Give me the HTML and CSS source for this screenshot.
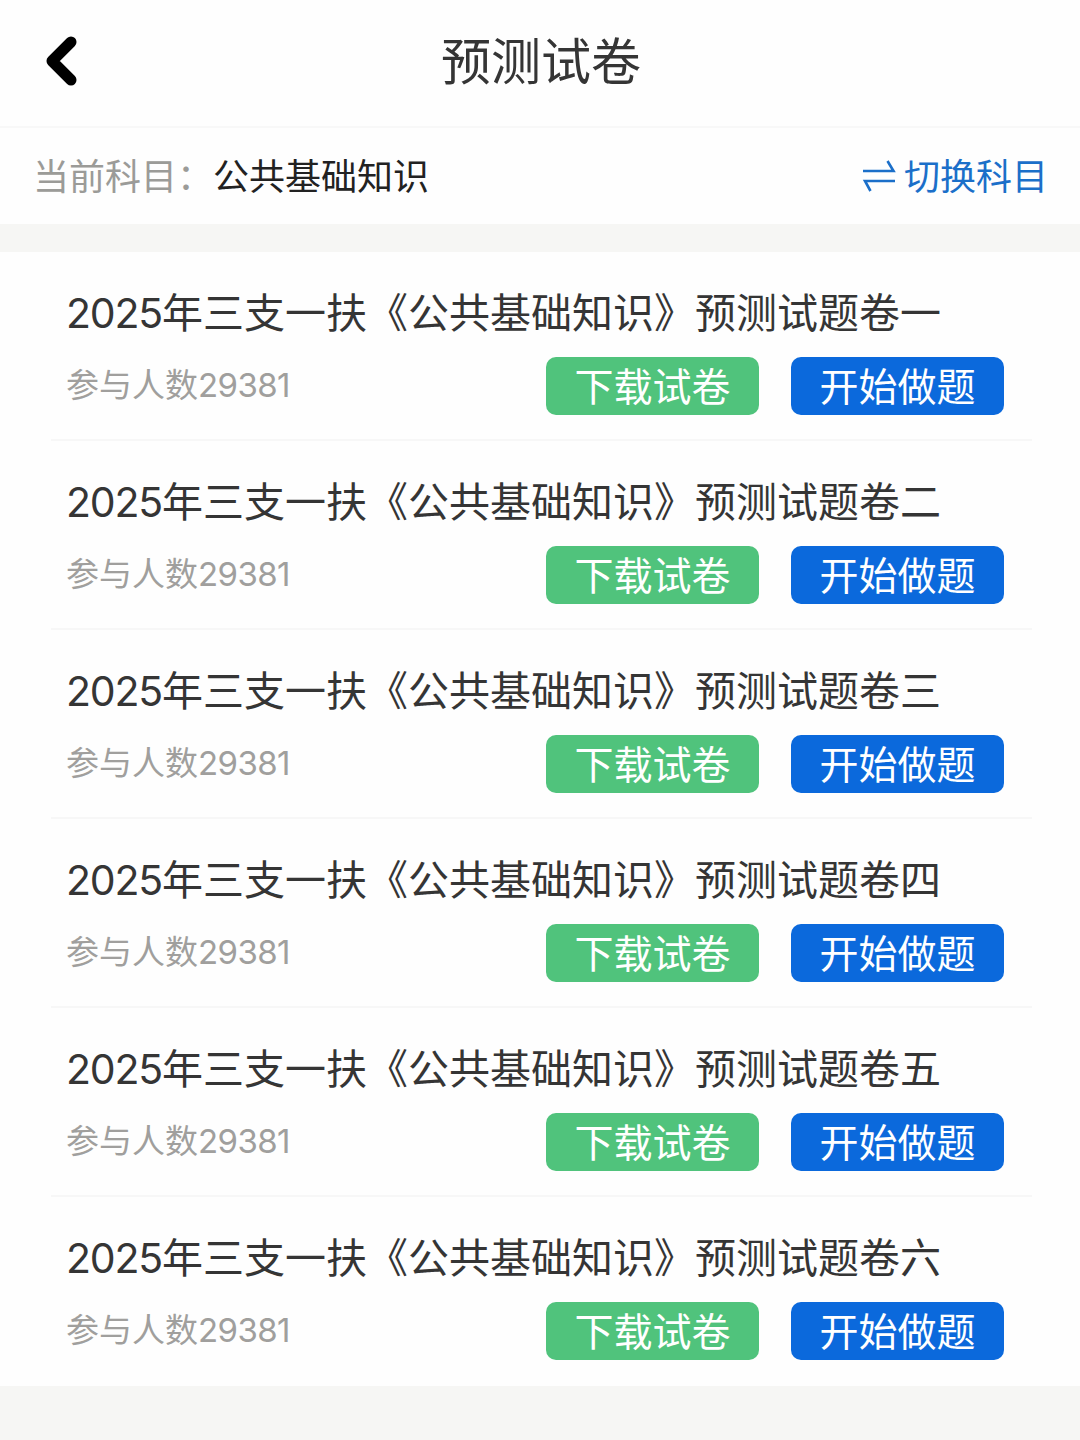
FILE: index.html
```
<!DOCTYPE html>
<html lang="zh-CN">
<head>
<meta charset="UTF-8">
<meta name="viewport" content="width=device-width, initial-scale=1.0">
<title>预测试卷</title>
<link rel="stylesheet" href="styles.css">
</head>
<body>
  <header class="header">
    <a class="back" href="#">
      <svg width="32" height="50" viewBox="0 0 32 50">
        <path d="M26 6L7 25L26 44" fill="none" stroke="#000" stroke-width="11" stroke-linecap="round" stroke-linejoin="round"/>
      </svg>
    </a>
    <h1>预测试卷</h1>
  </header>

  <div class="subject">
    <span class="label">当前科目：</span>
    <span class="name">公共基础知识</span>
    <a class="switch" href="#">
      <svg width="34" height="34" viewBox="0 0 34 34">
        <path d="M1 13H31.500L25.500 3M33 23H3L8.500 33" fill="none" stroke="#1b6fc9" stroke-width="2.600"/>
      </svg>
      <span>切换科目</span>
    </a>
  </div>

  <ul class="paper-list">
    <li class="paper">
      <h2><span class="num">2025</span>年三支一扶《公共基础知识》预测试题卷一</h2>
      <div class="row">
        <span class="count">参与人数<span class="num">29381</span></span>
        <button class="btn download">下载试卷</button>
        <button class="btn start">开始做题</button>
      </div>
    </li>
    <li class="paper">
      <h2><span class="num">2025</span>年三支一扶《公共基础知识》预测试题卷二</h2>
      <div class="row">
        <span class="count">参与人数<span class="num">29381</span></span>
        <button class="btn download">下载试卷</button>
        <button class="btn start">开始做题</button>
      </div>
    </li>
    <li class="paper">
      <h2><span class="num">2025</span>年三支一扶《公共基础知识》预测试题卷三</h2>
      <div class="row">
        <span class="count">参与人数<span class="num">29381</span></span>
        <button class="btn download">下载试卷</button>
        <button class="btn start">开始做题</button>
      </div>
    </li>
    <li class="paper">
      <h2><span class="num">2025</span>年三支一扶《公共基础知识》预测试题卷四</h2>
      <div class="row">
        <span class="count">参与人数<span class="num">29381</span></span>
        <button class="btn download">下载试卷</button>
        <button class="btn start">开始做题</button>
      </div>
    </li>
    <li class="paper">
      <h2><span class="num">2025</span>年三支一扶《公共基础知识》预测试题卷五</h2>
      <div class="row">
        <span class="count">参与人数<span class="num">29381</span></span>
        <button class="btn download">下载试卷</button>
        <button class="btn start">开始做题</button>
      </div>
    </li>
    <li class="paper">
      <h2><span class="num">2025</span>年三支一扶《公共基础知识》预测试题卷六</h2>
      <div class="row">
        <span class="count">参与人数<span class="num">29381</span></span>
        <button class="btn download">下载试卷</button>
        <button class="btn start">开始做题</button>
      </div>
    </li>
  </ul>
</body>
</html>
```
FILE: styles.css
```
* {
  box-sizing: border-box;
}

body {
  margin: 0;
  background-color: #f6f6f4;
  font-family: "Noto Sans CJK SC", sans-serif;
  color: #353535;
}

h1, h2 {
  margin: 0;
  font-weight: normal;
}

a {
  text-decoration: none;
}

.header {
  display: grid;
  grid-template-columns: 100px 1fr 98px;
  align-items: center;
  height: 128px;
  padding-bottom: 5px;
  background-color: #fefefe;
  border-bottom: 2px solid #f8f8f8;
}

.header h1 {
  padding-bottom: 5px;
  font-size: 50px;
  line-height: 72px;
  text-align: center;
}

.back {
  display: flex;
  padding-left: 45px;
}

.subject {
  display: flex;
  align-items: center;
  height: 96px;
  margin-bottom: 28px;
  padding: 0 32px 5px 33px;
  background-color: #fefefe;
  font-size: 36px;
  line-height: 52px;
}

.subject .label {
  color: #9b9b98;
}

.subject .name {
  color: #222;
}

.switch {
  display: flex;
  align-items: center;
  gap: 8px;
  margin-left: auto;
  color: #1b6fc9;
}

.switch svg {
  margin-top: 3px;
}

.paper-list {
  list-style: none;
  margin: 0;
  padding: 0 48px 0 51px;
  background-color: #fefefe;
}

.paper {
  height: 189px;
  padding: 28px 28px 0 15px;
  border-bottom: 2px solid #f7f7f7;
}

.paper:last-child {
  border-bottom: none;
}

.paper h2 {
  font-size: 41px;
  line-height: 60px;
  white-space: nowrap;
}

.num {
  font-family: Inter, sans-serif;
  letter-spacing: -1.2px;
}

.row {
  display: flex;
  align-items: center;
  margin-top: 14px;
}

.count {
  margin-right: auto;
  padding-bottom: 4px;
  color: #a09f9d;
  font-size: 33px;
  line-height: 50px;
}

.count .num {
  letter-spacing: -0.6px;
}

.btn {
  width: 213px;
  height: 58px;
  padding: 0 0 3px;
  border: none;
  border-radius: 10px;
  color: #fff;
  font-family: inherit;
  font-size: 39px;
  line-height: 55px;
}

.download {
  margin-right: 32px;
  background-color: #50c37c;
}

.start {
  background-color: #0b69dc;
}
```
